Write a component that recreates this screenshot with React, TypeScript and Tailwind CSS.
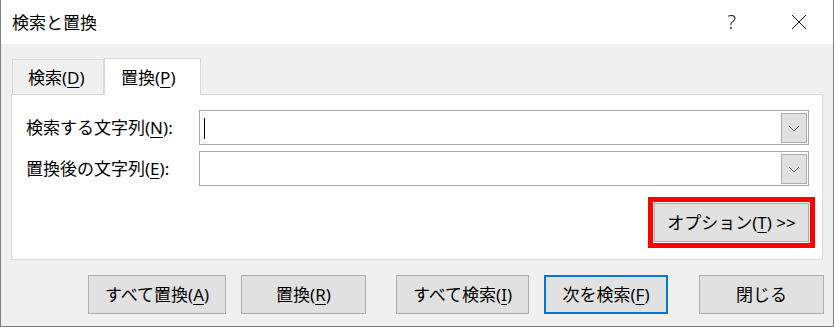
import { ReactNode } from 'react';

function Btn({ w, children, primary }: { w: string; children: ReactNode; primary?: boolean }) {
  return (
    <div
      className={`${w} h-[39px] flex items-center justify-center bg-[#e1e1e1] leading-none ${
        primary ? 'border-2 border-[#0078d7]' : 'border border-[#adadad]'
      }`}
    >
      {children}
    </div>
  );
}

function U({ c }: { c: string }) {
  return <span className="underline underline-offset-[3px] decoration-1">{c}</span>;
}

function Combo({ cursor }: { cursor?: boolean }) {
  return (
    <div className="w-[610px] h-[35px] border border-[#a9a9a9] bg-white flex items-center pl-[4px] pr-[1px] pt-px">
      {cursor && <div className="w-px h-[21px] bg-black" />}
      <div className="ml-auto w-[26px] h-[30px] bg-[#e1e1e1] border border-[#adadad] flex items-center justify-center">
        <svg width="12" height="7" viewBox="0 0 12 7">
          <path d="M1 1 L6 6 L11 1" fill="none" stroke="#606060" strokeWidth="1" />
        </svg>
      </div>
    </div>
  );
}

export default function App() {
  return (
    <div className="w-[834px] h-[327px] border-x border-b border-[#7f7f7f] bg-[#f0f0f0] flex flex-col font-['Noto_Sans','Noto_Sans_CJK_JP',sans-serif] text-[17px] text-black">
      <div className="h-[44px] shrink-0 bg-white flex items-center pl-[11px] leading-none">
        <span className="text-[17px]">検索と置換</span>
        <span className="ml-auto text-[20px] font-light text-[#222] mr-[55px]">?</span>
        <svg width="16" height="16" viewBox="0 0 16 16" className="mr-[26px]">
          <path d="M1 1 L15 15 M15 1 L1 15" stroke="#111" strokeWidth="1" />
        </svg>
      </div>

      <div className="flex items-end pl-[11px] mt-[13px]">
        <div className="w-[92px] h-[35px] mt-[2px] border border-b-0 border-[#d9d9d9] flex items-center pl-[15px] leading-none">
          検索(<U c="D" />)
        </div>
        <div className="w-[97px] h-[37px] -mb-px relative z-10 bg-white border border-b-0 border-[#d9d9d9] flex items-center pl-[16px] leading-none">
          置換(<U c="P" />)
        </div>
      </div>

      <div className="ml-[10px] w-[812px] h-[166px] border border-[#d9d9d9] bg-white flex flex-col pl-[14px] pt-[15px]">
        <div className="flex flex-col gap-[6px]">
          <div className="flex items-center">
            <div className="w-[173px] leading-none">
              検索する文字列(<U c="N" />):
            </div>
            <Combo cursor />
          </div>
          <div className="flex items-center">
            <div className="w-[173px] leading-none">
              置換後の文字列(<U c="E" />):
            </div>
            <Combo />
          </div>
        </div>
        <div className="self-end mr-[7px] mt-[11px] w-[167px] h-[51px] border-[5px] border-[#ff0000] p-px">
          <div className="w-full h-full bg-[#e1e1e1] border border-[#adadad] flex items-center justify-center leading-none">
            オプション(<U c="T" />)&nbsp;&gt;&gt;
          </div>
        </div>
      </div>

      <div className="flex mt-[15px] pl-[87px]">
        <Btn w="w-[138px]">
          すべて置換(<U c="A" />)
        </Btn>
        <div className="w-[15px]" />
        <Btn w="w-[125px]">
          置換(<U c="R" />)
        </Btn>
        <div className="w-[30px]" />
        <Btn w="w-[133px]">
          すべて検索(<U c="I" />)
        </Btn>
        <div className="w-[15px]" />
        <Btn w="w-[124px]" primary>
          次を検索(<U c="F" />)
        </Btn>
        <div className="w-[31px]" />
        <Btn w="w-[125px]">閉じる</Btn>
      </div>
    </div>
  );
}
